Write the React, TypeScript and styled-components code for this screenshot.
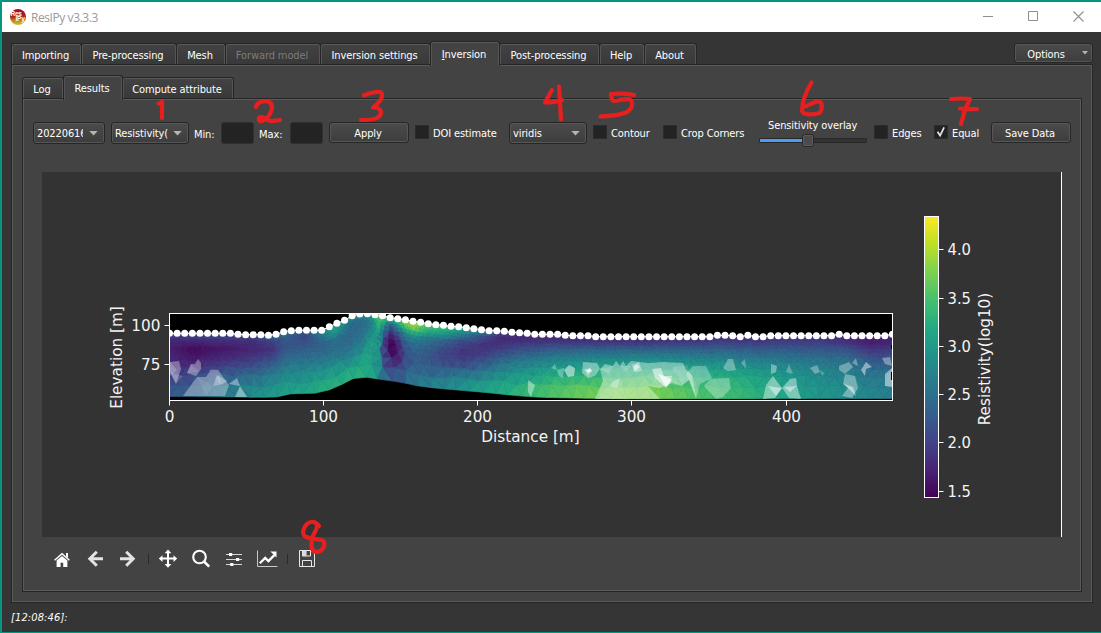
import React from "react";
import styled, { createGlobalStyle, css } from "styled-components";

const GlobalStyle = createGlobalStyle`
  * { box-sizing: border-box; }
  body { margin: 0; background: #353535; overflow: hidden; }
`;

const uiFont = css`
  font-family: "DejaVu Sans Condensed", "DejaVu Sans", sans-serif;
  font-stretch: condensed;
  font-size: 11px;
  letter-spacing: -0.11px;
  line-height: 13px;
  white-space: nowrap;
`;

const Window = styled.div`
  ${uiFont}
  position: relative;
  width: 1101px;
  height: 633px;
  display: flex;
  flex-direction: column;
  background: #353535;
  border: solid #07957f;
  border-width: 2px 0 1px 2px;
  color: #fff;
`;

const TitleBar = styled.header`
  display: flex;
  align-items: center;
  height: 30px;
  flex: none;
  background: #fff;
  padding-left: 8px;
`;

const Title = styled.span`
  margin-left: 5px;
  flex: 1;
  font-family: "Open Sans", sans-serif;
  font-stretch: normal;
  font-size: 12px;
  letter-spacing: -0.42px;
  color: #999;
`;

const WindowButtons = styled.div`
  display: flex;
  gap: 33px;
  margin-right: 16px;
`;

const TabBar = styled.nav<{ $height: number; $indent: number }>`
  display: flex;
  align-items: flex-end;
  flex: none;
  height: ${(p) => p.$height}px;
  padding-left: ${(p) => p.$indent}px;
`;

const Tab = styled.div<{ $width: number; $active?: boolean; $disabled?: boolean }>`
  position: relative;
  z-index: ${(p) => (p.$active ? 2 : 0)};
  width: ${(p) => p.$width}px;
  height: ${(p) => (p.$active ? 25 : 21)}px;
  margin-bottom: ${(p) => (p.$active ? -2 : 0)}px;
  margin-right: -1px;
  padding-top: ${(p) => (p.$active ? 6 : 5)}px;
  padding-right: 2px;
  text-align: center;
  border: 1px solid #262626;
  border-bottom: 0;
  border-radius: 3px 3px 0 0;
  color: ${(p) => (p.$disabled ? "#7c7c7c" : "#fff")};
  background: ${(p) => (p.$active ? "#434343" : "linear-gradient(#434343, #393939)")};
  box-shadow: inset 0 1px #5a5a5a, inset 1px 0 #545454, inset -1px 0 #545454;
`;

const Pane = styled.section<{ $margin: string }>`
  display: flex;
  flex-direction: column;
  flex: 1;
  min-height: 0;
  margin: ${(p) => p.$margin};
  background: #434343;
  border: 1px solid #262626;
  box-shadow: inset 0 0 0 1px #5a5a5a;
  padding: 1px;
`;

const raised = css`
  border: 1px solid #262626;
  border-radius: 3px;
  background: linear-gradient(#4b4b4b, #3d3d3d);
  box-shadow: inset 0 0 0 1px #565656;
`;

const Button = styled.button<{ $width: number; $left?: number }>`
  ${uiFont}
  ${raised}
  color: #fff;
  width: ${(p) => p.$width}px;
  height: 21px;
  margin-left: ${(p) => p.$left ?? 0}px;
  padding: 1px 2px 0 0;
  flex: none;
`;

const OptionsButton = styled(Button)`
  position: relative;
  height: 20px;
  margin: 0 8px 1px auto;
  padding: 2px 15px 0 0;
`;

const OptionsArrow = styled.svg`
  position: absolute;
  right: 4px;
  top: 7px;
`;

const Combo = styled.div<{ $width: number; $left?: number }>`
  ${raised}
  display: flex;
  align-items: center;
  justify-content: space-between;
  flex: none;
  width: ${(p) => p.$width}px;
  height: 22px;
  margin-left: ${(p) => p.$left ?? 0}px;
  padding: 1px 6px 0 3px;
`;

const ComboText = styled.span<{ $clip: number }>`
  width: ${(p) => p.$clip}px;
  overflow: hidden;
`;

const Controls = styled.div`
  display: flex;
  flex: none;
  height: 50px;
  margin-top: 22px;
  padding-left: 9px;
`;

const FieldLabel = styled.label<{ $width: number }>`
  width: ${(p) => p.$width}px;
  padding: 6px 0 0 5px;
  flex: none;
`;

const Field = styled.div`
  flex: none;
  width: 33px;
  height: 22px;
  border: 1px solid #303030;
  border-radius: 3px;
  background: #232323;
`;

const Check = styled.label<{ $width: number }>`
  display: flex;
  flex: none;
  gap: 4px;
  width: ${(p) => p.$width}px;
  height: 14px;
  margin-top: 3px;
  padding-left: 6px;
`;

const Box = styled.span`
  width: 14px;
  height: 14px;
  background: #232323;
  border: 1px solid #2c2c2c;
`;

const CheckText = styled.span`
  padding-top: 2px;
`;

const Sensitivity = styled.div`
  width: 108px;
  margin-left: 8px;
  margin-right: 1px;
  flex: none;
`;

const SensitivityText = styled.div`
  height: 12px;
  padding-left: 9px;
  line-height: 7px;
`;

const Canvas = styled.div`
  width: 1020px;
  height: 365px;
  flex: none;
  margin-left: 18px;
  background: #333;
  border-right: 1px solid #fff;
`;

const Toolbar = styled.div`
  display: flex;
  align-items: center;
  height: 44px;
  padding-left: 21.5px;
`;

const Tool = styled.span`
  width: 33px;
  display: flex;
  justify-content: center;
`;

const Separator = styled.i`
  width: 1px;
  height: 10px;
  margin: 0 3px;
  background: #2b2b2b;
`;

const Status = styled.footer`
  height: 29px;
  flex: none;
  padding: 8px 0 0 9px;
  font-style: italic;
  letter-spacing: 0.12px;
`;

const Annotations = styled.svg`
  position: absolute;
  z-index: 5;
  left: -2px;
  top: -2px;
  pointer-events: none;
`;

const Arrow = () => (
  <svg width="9" height="5" viewBox="0 0 9 5"><path d="M0.3 0h8.4L4.5 4.6z" fill="#b4b4b4" /></svg>
);

/* ---------- section mesh ---------- */

const VIRIDIS: number[][] = [
  [68, 1, 84], [72, 36, 117], [65, 68, 135], [53, 95, 141], [42, 120, 142],
  [33, 145, 140], [34, 168, 132], [68, 191, 112], [122, 209, 81], [189, 223, 38], [253, 231, 37],
];

const viridis = (v: number) => {
  const s = Math.min(0.9999, Math.max(0, v)) * 10;
  const i = Math.floor(s);
  const f = s - i;
  return `rgb(${VIRIDIS[i].map((c, k) => Math.round(c + (VIRIDIS[i + 1][k] - c) * f)).join(",")})`;
};

const X0 = 169.5;
const DX = 7.61;
const elevations = [
  130, 130, 130, 130, 130, 130, 130, 130, 130, 133, 134, 134, 134, 136, 133, 125, 122, 121, 121, 121,
  121, 110, 100, 91, 77, 72, 71, 74, 77, 83, 86, 89, 94, 97, 101, 104, 106, 109, 110, 113,
  116, 119, 122, 122, 124, 127, 128, 130, 133, 133, 133, 133, 136, 137, 137, 137, 140, 140, 140, 140,
  140, 140, 140, 140, 140, 140, 140, 140, 140, 140, 140, 140, 136, 136, 137, 140, 136, 140, 140, 137,
  137, 137, 137, 137, 137, 137, 137, 137, 133, 137, 137, 137, 137, 137, 137, 133,
];
const electrodes = elevations.map((v, i) => [X0 + i * DX, 290 + v / 3]);

const base = [
  [169, 396.5], [240, 397], [262, 397.6], [273, 396], [275, 397.5], [286, 394], [320, 393], [335, 388],
  [350, 380], [358, 376.5], [363, 376.5], [370, 378], [400, 382], [420, 386.5], [440, 388.5], [480, 392],
  [520, 396], [540, 397.3], [570, 398], [620, 398.8], [893, 398.5],
];

const DEPTHS = [0, 0.12, 0.25, 0.4, 0.55, 0.7, 0.85, 1];
const FIELD: [number, number[]][] = [
  [169, [0.22, 0.12, 0.1, 0.12, 0.14, 0.18, 0.25, 0.28]],
  [192, [0.25, 0.12, 0.03, 0.07, 0.15, 0.23, 0.29, 0.32]],
  [220, [0.25, 0.14, 0.06, 0.12, 0.2, 0.3, 0.36, 0.4]],
  [250, [0.22, 0.13, 0.11, 0.17, 0.27, 0.37, 0.45, 0.5]],
  [272, [0.34, 0.19, 0.15, 0.24, 0.34, 0.43, 0.5, 0.55]],
  [286, [0.42, 0.3, 0.27, 0.33, 0.4, 0.47, 0.53, 0.58]],
  [305, [0.24, 0.21, 0.28, 0.35, 0.41, 0.48, 0.54, 0.6]],
  [322, [0.5, 0.37, 0.32, 0.36, 0.44, 0.52, 0.59, 0.62]],
  [335, [0.6, 0.55, 0.37, 0.36, 0.42, 0.52, 0.6, 0.64]],
  [350, [0.48, 0.36, 0.34, 0.35, 0.4, 0.48, 0.58, 0.65]],
  [362, [0.5, 0.36, 0.36, 0.4, 0.46, 0.55, 0.6, 0.64]],
  [371, [0.6, 0.42, 0.46, 0.54, 0.58, 0.6, 0.6, 0.6]],
  [379, [0.8, 0.68, 0.6, 0.54, 0.5, 0.48, 0.48, 0.47]],
  [384, [0.82, 0.58, 0.36, 0.2, 0.18, 0.28, 0.36, 0.38]],
  [391, [0.7, 0.3, 0.1, 0.01, 0.01, 0.1, 0.22, 0.3]],
  [398, [0.8, 0.5, 0.25, 0.09, 0.08, 0.13, 0.24, 0.32]],
  [405, [0.88, 0.7, 0.42, 0.28, 0.22, 0.25, 0.32, 0.38]],
  [414, [0.88, 0.8, 0.48, 0.34, 0.3, 0.31, 0.36, 0.42]],
  [427, [0.78, 0.64, 0.4, 0.31, 0.28, 0.31, 0.38, 0.45]],
  [445, [0.74, 0.56, 0.32, 0.21, 0.2, 0.31, 0.41, 0.49]],
  [465, [0.66, 0.4, 0.2, 0.15, 0.2, 0.35, 0.46, 0.54]],
  [485, [0.46, 0.22, 0.14, 0.19, 0.3, 0.42, 0.53, 0.6]],
  [500, [0.24, 0.12, 0.16, 0.27, 0.39, 0.49, 0.57, 0.63]],
  [520, [0.12, 0.13, 0.23, 0.36, 0.47, 0.55, 0.62, 0.67]],
  [550, [0.1, 0.16, 0.31, 0.44, 0.55, 0.63, 0.7, 0.73]],
  [580, [0.1, 0.18, 0.35, 0.48, 0.58, 0.67, 0.74, 0.78]],
  [610, [0.1, 0.19, 0.37, 0.5, 0.61, 0.7, 0.78, 0.81]],
  [640, [0.1, 0.19, 0.37, 0.51, 0.62, 0.71, 0.79, 0.82]],
  [670, [0.1, 0.2, 0.37, 0.5, 0.61, 0.69, 0.76, 0.78]],
  [700, [0.12, 0.21, 0.36, 0.48, 0.59, 0.65, 0.7, 0.72]],
  [740, [0.12, 0.2, 0.34, 0.45, 0.55, 0.62, 0.66, 0.67]],
  [780, [0.14, 0.2, 0.32, 0.42, 0.5, 0.55, 0.58, 0.6]],
  [820, [0.14, 0.2, 0.3, 0.39, 0.45, 0.48, 0.51, 0.53]],
  [850, [0.11, 0.15, 0.27, 0.37, 0.42, 0.45, 0.48, 0.48]],
  [870, [0.08, 0.09, 0.18, 0.29, 0.37, 0.42, 0.45, 0.45]],
  [893, [0.1, 0.11, 0.18, 0.27, 0.34, 0.4, 0.42, 0.42]],
];

const lerpLine = (pts: number[][], x: number) => {
  for (let i = 1; i < pts.length; i++) {
    if (x <= pts[i][0]) {
      const [ax, ay] = pts[i - 1];
      const [bx, by] = pts[i];
      return ay + ((by - ay) * Math.max(0, x - ax)) / (bx - ax);
    }
  }
  return pts[pts.length - 1][1];
};

const sample = (x: number, t: number) => {
  let i = 1;
  while (i < FIELD.length - 1 && x > FIELD[i][0]) i++;
  let k = 1;
  while (k < DEPTHS.length - 1 && t > DEPTHS[k]) k++;
  const fx = (x - FIELD[i - 1][0]) / (FIELD[i][0] - FIELD[i - 1][0]);
  const ft = (t - DEPTHS[k - 1]) / (DEPTHS[k] - DEPTHS[k - 1]);
  const a = FIELD[i - 1][1];
  const b = FIELD[i][1];
  return (a[k - 1] * (1 - ft) + a[k] * ft) * (1 - fx) + (b[k - 1] * (1 - ft) + b[k] * ft) * fx;
};

const noise = (n: number) => {
  const s = Math.sin(n * 127.1 + 11.7) * 43758.5453;
  return s - Math.floor(s) - 0.5;
};

type Node = { x: number; t: number };
const LEVELS = [0, 0.05, 0.1, 0.155, 0.215, 0.28, 0.35, 0.43, 0.53, 0.65, 0.81, 1];
const STEPS = [3.8, 3.8, 3.8, 4.2, 4.6, 5.2, 6, 7, 8.5, 10, 12, 13];

const rows: Node[][] = LEVELS.map((t, r) => {
  const count = Math.round(723 / STEPS[r]);
  const step = 723 / count;
  const inner = r > 0 && r < LEVELS.length - 1;
  const out: Node[] = [{ x: X0, t }];
  for (let i = 1; i < count; i++) {
    const j = noise(r * 997 + i);
    const k = noise(r * 571 + i * 3 + 1);
    out.push({
      x: X0 + step * (i + (r % 2 ? 0.25 : -0.25) + j * 0.3),
      t: inner ? t + k * (LEVELS[r + 1] - t) * 0.35 : t,
    });
  }
  out.push({ x: 892.5, t });
  return out;
});

const toXY = (n: Node) => {
  const top = lerpLine(electrodes, n.x);
  return `${n.x.toFixed(1)},${(top + (lerpLine(base, n.x) - top) * n.t).toFixed(1)}`;
};

const triangles: { points: string; fill: string }[] = [];
for (let r = 0; r < rows.length - 1; r++) {
  const a = rows[r];
  const b = rows[r + 1];
  let i = 0;
  let j = 0;
  while (i < a.length - 1 || j < b.length - 1) {
    const useTop = j === b.length - 1 || (i < a.length - 1 && a[i + 1].x + a[i].x < b[j + 1].x + b[j].x);
    const tri = useTop ? [a[i], a[i + 1], b[j]] : [a[i], b[j + 1], b[j]];
    if (useTop) i++;
    else j++;
    const cx = (tri[0].x + tri[1].x + tri[2].x) / 3;
    const ct = (tri[0].t + tri[1].t + tri[2].t) / 3;
    triangles.push({ points: tri.map(toXY).join(" "), fill: viridis(sample(cx, ct) + noise(triangles.length) * 0.012) });
  }
}

/* Low-sensitivity patches: [opacity, outline] */
const PATCHES: [number, string][] = [
  [0.33, "170,362 179,361 181,369 176,384 170,372"],
  [0.15, "170,372 183,376 176,384"],
  [0.2, "170,362 177,370 170,376"],
  [0.33, "187,373 191,364 195,364 198,359 201,363 201,369 196,376"],
  [0.12, "191,364 199,372 187,373"],
  [0.33, "183,396 197,377 206,377 211,369.5 218,370 229,385 225,396"],
  [0.08, "197,377 206,396 213,386"],
  [0.3, "213,386 217,375 227,381 223,384"],
  [0.15, "215,378 220,375 221,385"],
  [0.38, "229,384 237,378 240,386"],
  [0.42, "240,386 247,397 235,397"],
  [0.3, "551,368 555,364 557,370"],
  [0.4, "528,380 535,385 531,397 528,392"],
  [0.3, "557,370 564,368 563,378 559,376"],
  [0.5, "564,370 569,365 575,368 574,376 568,377"],
  [0.4, "583,362 597,363 600,369 595,376 588,378 582,373"],
  [0.35, "584,369 592,370 588,376"],
  [0.75, "586,370 590,368 592,371 588,373"],
  [0.38, "595,399 603,381 600,369 605,364 613,366 616,361 620,366 623,361 626,366 631,361 648,363 663,362 683,363 686,370 692,375 696,397 689,380 682,386 672,383 660,388 648,386 660,399"],
  [0.2, "600,369 613,366 609,374"],
  [0.08, "609,385 620,377 626,399 598,399"],
  [0.35, "613,381 620,379 617,388 610,386"],
  [0.35, "632,365 639,362 642,371 634,372"],
  [0.55, "633,367 637,364 640,367 635,371"],
  [0.18, "620,366 631,366 626,372"],
  [0.08, "646,375 675,368 678,385 660,387"],
  [0.5, "652,369 661,368 664,376 672,376 670,383 666,388 655,378"],
  [0.7, "658,374 664,376 672,380 666,387"],
  [0.15, "672,367 687,365 693,378 682,384"],
  [0.3, "686,374 693,366 706,366 712,378 700,384 696,399 689,380"],
  [0.3, "704,386 710,379 729,378 731,388 723,397 716,399"],
  [0.33, "723,368 728,359 733,359 736,370 728,371"],
  [0.28, "741,363 745,359 746,369"],
  [0.38, "771,364 777,366 776,372 771,374"],
  [0.28, "786,372 789,364 793,374"],
  [0.42, "766,385 773,376 782,388 775,398 763,399"],
  [0.45, "768,386 782,388 776,396"],
  [0.42, "782,388 790,379 796,378 797,386 801,399 789,398"],
  [0.45, "784,387 797,386 790,392"],
  [0.32, "810,368 817,365 820,372 815,374"],
  [0.22, "820,370 825,373 822,376"],
  [0.33, "839,366 849,362 853,367 845,374 839,370"],
  [0.32, "852,363 856,358 858,366"],
  [0.36, "845,374 855,376 858,388 852,398 842,396 848,388 843,384"],
  [0.5, "844,384 853,387 856,396"],
  [0.45, "861,370 866,362 872,367 866,369 865,376"],
  [0.36, "882,358 890,357 892,366 885,364"],
  [0.5, "885,374 892,368 892,387 885,386"],
];

const XTICKS: [number, string][] = [[169.5, "0"], [323.5, "100"], [477.5, "200"], [631.5, "300"], [786.5, "400"]];
const CTICKS: [number, string][] = [[249.5, "4.0"], [298.5, "3.5"], [346.5, "3.0"], [394.5, "2.5"], [442.5, "2.0"], [491.5, "1.5"]];

const ChartSvg = styled.svg`
  display: block;
  font-family: "DejaVu Sans", sans-serif;
  font-stretch: normal;
  font-size: 15.28px;
  letter-spacing: 0;
  fill: #f4f4f4;
`;

const Section = () => (
  <ChartSvg width="1019" height="365" viewBox="42 172 1019 365">
    <defs>
      <linearGradient id="bar" x1="0" y1="1" x2="0" y2="0">
        {VIRIDIS.map((_, i) => <stop key={i} offset={i / 10} stopColor={viridis(i / 10)} />)}
      </linearGradient>
      <clipPath id="axes"><rect x="169" y="313" width="724" height="88" /></clipPath>
    </defs>
    <rect x="169" y="313" width="724" height="88" fill="#000" />
    <g clipPath="url(#axes)">
      {triangles.map((t, i) => <polygon key={i} points={t.points} fill={t.fill} stroke={t.fill} strokeWidth="0.6" />)}
      {PATCHES.map(([o, points], i) => <polygon key={i} points={points} fill="#fff" opacity={o} />)}
      <path d="M892.5 345v4M892.5 372v8" stroke="#000" strokeWidth="3" />
    </g>
    <rect x="169.5" y="313.5" width="723" height="87" fill="none" stroke="#fff" />
    <g clipPath="url(#axes)" fill="#fff">
      <polyline points={electrodes.map((p) => p.join(",")).join(" ")} fill="none" stroke="#fff" strokeWidth="1" />
      {electrodes.map(([x, y], i) => <circle key={i} cx={x} cy={y} r="3.5" />)}
    </g>
    {XTICKS.map(([x, label]) => (
      <g key={label}>
        <path d={`M${x} 401v4.5`} stroke="#fff" />
        <text x={x} y="421.5" textAnchor="middle">{label}</text>
      </g>
    ))}
    <path d="M164.5 325.5h5M164.5 364.5h5" stroke="#fff" />
    <text x="160.5" y="330.5" textAnchor="end">100</text>
    <text x="160.5" y="369.5" textAnchor="end">75</text>
    <text x="530.5" y="441.5" textAnchor="middle">Distance [m]</text>
    <text transform="translate(122 357.5) rotate(-90)" textAnchor="middle">Elevation [m]</text>
    <rect x="924.5" y="216.5" width="14" height="281" fill="url(#bar)" stroke="#fff" />
    {CTICKS.map(([y, label]) => (
      <g key={label}>
        <path d={`M939 ${y}h4.5`} stroke="#fff" />
        <text x="947.5" y={y + 5.5} textLength="23.5" lengthAdjust="spacingAndGlyphs">{label}</text>
      </g>
    ))}
    <text transform="translate(990 359) rotate(-90)" textAnchor="middle">Resistivity(log10)</text>
  </ChartSvg>
);

const Logo = () => (
  <svg width="16" height="16" viewBox="0 0 16 16" fontFamily="Liberation Sans, sans-serif" fontWeight="bold" fill="#fff">
    <defs>
      <linearGradient id="logo" x1="0" y1="0" x2="0" y2="1">
        <stop offset="0.1" stopColor="#a8101a" /><stop offset="0.5" stopColor="#a5281c" />
        <stop offset="0.72" stopColor="#c98525" /><stop offset="1" stopColor="#c9c33a" />
      </linearGradient>
    </defs>
    <circle cx="8" cy="8" r="8" fill="url(#logo)" />
    <text x="0.6" y="7.2" fontSize="6.5" letterSpacing="-0.3">Res</text>
    <text x="5.6" y="12.4" fontSize="6.5" letterSpacing="-0.3">IPy</text>
  </svg>
);

const icon = { width: 24, height: 24, viewBox: "0 0 24 24", fill: "none", stroke: "#fff" };

const HomeIcon = () => (
  <svg {...icon}>
    <path d="M4.6 13.2L12 6.7l7.4 6.5" strokeWidth="1.5" />
    <path d="M16 6h2v5l-2-1.8zM6.6 13.6L12 8.9l5.4 4.7V20h-4.2v-4.3h-2.6V20h-4z" fill="#fff" stroke="none" />
  </svg>
);
const LeftIcon = () => (
  <svg {...icon} stroke="#e3e3e3"><path d="M13.800 4.800l-7 7 7 7M7.300 11.800H20" strokeWidth="3" /></svg>
);
const RightIcon = () => (
  <svg {...icon} stroke="#e3e3e3"><path d="M10.200 4.800l7 7-7 7M16.700 11.800H4" strokeWidth="3" /></svg>
);
const PanIcon = () => (
  <svg {...icon}>
    <path d="M12 5v13M5 11.600h14" strokeWidth="2" />
    <path d="M12 2.500l3.400 3.700H8.600zM12 20.800l3.400-3.700H8.600zM2.800 11.600l3.700-3.400v6.800zM21.200 11.600l-3.700-3.400v6.800z" fill="#fff" stroke="none" />
  </svg>
);
const ZoomIcon = () => (
  <svg {...icon}><circle cx="10.5" cy="10" r="6.300" strokeWidth="2.1" /><path d="M15 14.500l5.200 5.200" strokeWidth="2.6" /></svg>
);
const SlidersIcon = () => (
  <svg {...icon}>
    <path d="M4 7.5h16M4 12.5h16M4 17.5h16" strokeWidth="1" stroke="#d8d8d8" />
    <path d="M7 5.900h3.200v3.2H7zM14 10.900h3.200v3.2H14zM8.2 15.900h3.200v3.2H8.2z" fill="#fff" stroke="none" />
  </svg>
);
const ChartIcon = () => (
  <svg {...icon}>
    <path d="M2.5 3.500v16h20" stroke="#c9c9c9" />
    <path d="M4.8 16.300l5.4-5.4 3.2 3.2 6-6" strokeWidth="2.3" />
    <path d="M15.4 4.500h6.1v6.1z" fill="#fff" stroke="none" />
  </svg>
);
const SaveIcon = () => (
  <svg {...icon}>
    <path d="M4.5 3.500h11.800l3.2 3.2v12.800h-15zM7.5 19.5v-6h9v6M7.500 3.500v5.500h8V3.500" strokeWidth="1" stroke="#e8e8e8" />
    <path d="M8 4h3.600v4.800H8z" fill="#fff" stroke="none" opacity=".8" />
  </svg>
);

const mainTabs: { label: React.ReactNode; width: number; active?: boolean; disabled?: boolean }[] = [
  { label: "Importing", width: 71 },
  { label: "Pre-processing", width: 96 },
  { label: "Mesh", width: 50 },
  { label: "Forward model", width: 96, disabled: true },
  { label: "Inversion settings", width: 111 },
  { label: <><u>I</u>nversion</>, width: 70, active: true },
  { label: "Post-processing", width: 101 },
  { label: "Help", width: 46 },
  { label: "About", width: 53 },
];

const CheckBox = ({ label, width, on }: { label: string; width: number; on?: boolean }) => (
  <Check $width={width}>
    <Box>
      {on && <svg width="12" height="12" viewBox="0 0 12 12" display="block"><path d="M2.5 5.800l2.600 3.800 4-8.300" fill="none" stroke="#e6e6e6" strokeWidth="1.7" /></svg>}
    </Box>
    <CheckText>{label}</CheckText>
  </Check>
);

export default function App() {
  return (
    <>
      <GlobalStyle />
      <Window>
        <TitleBar>
          <Logo />
          <Title>ResIPy v3.3.3</Title>
          <WindowButtons>
            <svg width="12" height="12"><path d="M0 5.5h10" stroke="#8f8f8f" /></svg>
            <svg width="12" height="12"><path d="M.5 .5h9v9h-9z" fill="none" stroke="#8f8f8f" /></svg>
            <svg width="12" height="12"><path d="M.5 .5l10 10M10.500 .5l-10 10" stroke="#8f8f8f" strokeWidth="1.1" /></svg>
          </WindowButtons>
        </TitleBar>

        <TabBar $height={32} $indent={9}>
          {mainTabs.map((t, i) => (
            <Tab key={i} $width={t.width} $active={t.active} $disabled={t.disabled}>{t.label}</Tab>
          ))}
          <OptionsButton $width={79}>
            Options
            <OptionsArrow width="6" height="4"><path d="M0 0h6L3 3.6z" fill="#b4b4b4" /></OptionsArrow>
          </OptionsButton>
        </TabBar>

        <Pane $margin="0 8px 0 9px">
          <TabBar $height={32} $indent={9}>
            <Tab $width={42}>Log</Tab>
            <Tab $width={60} $active>Results</Tab>
            <Tab $width={112}>Compute attribute</Tab>
          </TabBar>
          <Pane $margin="0 9px 9px">
            <Controls>
              <Combo $width={72}><ComboText $clip={46}>20220616</ComboText><Arrow /></Combo>
              <Combo $width={78} $left={6}><ComboText $clip={53}>Resistivity(</ComboText><Arrow /></Combo>
              <FieldLabel $width={32}>Min:</FieldLabel>
              <Field />
              <FieldLabel $width={36}>Max:</FieldLabel>
              <Field />
              <Button $width={80} $left={6}>Apply</Button>
              <CheckBox label="DOI estimate" width={94} />
              <Combo $width={78} $left={6}><ComboText $clip={50}>viridis</ComboText><Arrow /></Combo>
              <CheckBox label="Contour" width={70} />
              <CheckBox label="Crop Corners" width={94} />
              <Sensitivity>
                <SensitivityText>Sensitivity overlay</SensitivityText>
                <svg width="108" height="14" viewBox="0 0 108 14" display="block">
                  <rect x=".5" y="4.5" width="107" height="4" rx="1" fill="#333" stroke="#272727" />
                  <rect x="1" y="5" width="44" height="3" fill="#4a9df0" />
                  <rect x="43.5" y=".5" width="11" height="12" rx="2" fill="#4b4b4b" stroke="#262626" />
                  <rect x="44.5" y="1.5" width="9" height="10" rx="1" fill="none" stroke="#5c5c5c" />
                </svg>
              </Sensitivity>
              <CheckBox label="Edges" width={60} />
              <CheckBox label="Equal" width={63} on />
              <Button $width={80}>Save Data</Button>
            </Controls>
            <Canvas><Section /></Canvas>
            <Toolbar>
              <Tool><HomeIcon /></Tool>
              <Tool><LeftIcon /></Tool>
              <Tool><RightIcon /></Tool>
              <Separator />
              <Tool><PanIcon /></Tool>
              <Tool><ZoomIcon /></Tool>
              <Tool><SlidersIcon /></Tool>
              <Tool><ChartIcon /></Tool>
              <Separator />
              <Tool><SaveIcon /></Tool>
            </Toolbar>
          </Pane>
        </Pane>

        <Status>[12:08:46]:</Status>

        <Annotations width="1101" height="633" viewBox="0 0 1101 633" fill="none" stroke="#e81f1f" strokeWidth="4.2" strokeLinecap="round" strokeLinejoin="round">
          <path d="M158.5 103.5Q162 103 162 101.5V118" />
          <path d="M256 107C257 102 263 100.5 268 101.5C275 104 272 114 265 119.5C260 123 257.500 120.500 259.500 117.500C262 115 266 120 271 121C274 121.500 277 120 280 120" />
          <path d="M364 95.300C370 93 376 91.500 380 92C386 95 378 104 373 107.500C379 107.500 381 110 381 113C380 118 375 120 361 120" />
          <path d="M552 90Q548 97 545 102.500Q553 103 562 100M559 86.500L561 119.500" />
          <path d="M634 95C626 93.500 618 93.500 611 94C611 97 612 100 614 101C620 100.500 625 98 630 99.500C634 103 632 109 627 112C620 115.500 609 116 600.500 116.500" />
          <path d="M811.500 82.500C807 90 802 101 802 111Q803 114 809 114.300Q818 114.500 820.500 112C823 106 822 102 818 101.300C813 102 808 106 803.500 107" />
          <path d="M951 99Q962 98 970 99Q966 107 964 113L961 124M960 108.500Q968 109.500 977 109" />
          <path d="M319 526C315 521 311 520.500 307 524C303 528 302 533 304.500 536C309 539.500 318 538 323.500 541C326 545 323 551 317 552C311 552 311 546 312 539C313 533 318 530 317 524.500" />
        </Annotations>
      </Window>
    </>
  );
}
